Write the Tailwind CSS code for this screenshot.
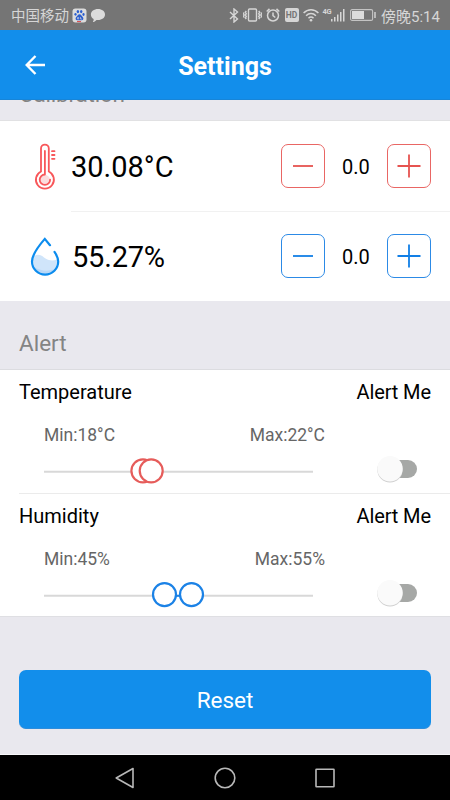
<!DOCTYPE html>
<html lang="en">
<head>
    <meta charset="UTF-8">
    <meta name="viewport" content="width=device-width, initial-scale=1.0">
    <title>Settings</title>
    <script src="https://cdn.jsdelivr.net/npm/@tailwindcss/browser@4"></script>
</head>
<body class="bg-[#e9e8ee] font-[Roboto,'Noto_Sans_CJK_SC',sans-serif]">
    <div class="w-[450px] h-[800px] flex flex-col overflow-hidden">
        <!-- Status bar -->
        <div class="h-[30px] shrink-0 bg-[#757575] text-[#d6d6d6] flex items-center pl-[11px] pr-[10px] text-[14.500px] leading-none whitespace-nowrap">
            <span class="w-[59px] pt-[4px]">中国移动</span>
            <svg class="ml-[2px]" width="15" height="15" viewBox="0 0 15 15">
                <rect x="0.5" y="0.5" width="14" height="14" rx="3" fill="#dcdcdc"/>
                <g fill="#2c5fd0">
                    <ellipse cx="5.9" cy="3.6" rx="1.2" ry="1.6"/>
                    <ellipse cx="9.2" cy="3.6" rx="1.2" ry="1.6"/>
                    <ellipse cx="3.5" cy="6.3" rx="1.1" ry="1.4"/>
                    <ellipse cx="11.5" cy="6.5" rx="1.1" ry="1.4"/>
                    <path d="M7.5 6.2c1.6 0 2 1.6 3.2 2.7 1.3 1.3.7 3.4-1.2 3.4H5.3c-1.7 0-2.3-2-1.1-3.3C5.4 7.900 6 6.200 7.500 6.200z"/>
                </g>
                <path d="M5.500 9.500h1.200v1.500H5.500zM8.500 9v2h1.500" fill="none" stroke="#dcdcdc" stroke-width=".6"/>
                <path d="M5 13.600h4" stroke="#d44" stroke-width="1"/>
            </svg>
            <svg class="ml-[3px]" width="16" height="15" viewBox="0 0 16 15">
                <path d="M8 1c4 0 7 2.300 7 5.500S12 12 8 12c-.5 0-1 0-1.500-.1C5.500 13.200 4 13.900 2.800 14c.7-.8 1-1.800.8-2.900C2 10.100.9 8.500.9 6.500.9 3.300 4 1 8 1z" fill="#dcdcdc"/>
            </svg>
            <div class="ml-auto flex items-center">
                <svg width="10" height="15" viewBox="0 0 10 15" fill="none" stroke="#d6d6d6" stroke-width="1.400">
                    <path d="M1 4l7.500 7L5 14V1l3.500 3L1 11"/>
                </svg>
                <svg class="ml-[4px]" width="19" height="14" viewBox="0 0 19 14" fill="none" stroke="#d6d6d6" stroke-width="1.400">
                    <rect x="5.500" y="1" width="8" height="12" rx="1"/>
                    <path d="M3.300 3l-1 1.300 1 1.400-1 1.300 1 1.400-1 1.300 1 1.300M.9 4.500L.5 5.500l.5 1.500-.5 1.500.5 1M15.700 3l1 1.300-1 1.400 1 1.300-1 1.400 1 1.300-1 1.300M18.100 4.500l.4 1-.5 1.500.5 1.500-.5 1"/>
                </svg>
                <svg class="ml-[4px]" width="14" height="14" viewBox="0 0 14 14" fill="none" stroke="#d6d6d6" stroke-width="1.500">
                    <circle cx="7" cy="7.500" r="5.500"/>
                    <path d="M7 4.500v3.200l2.300 1.800M.7 3.500L3.500.9M13.300 3.500L10.500.9"/>
                </svg>
                <div class="ml-[5px] w-[14px] h-[14px] rounded-[2px] bg-[#d6d6d6] text-[#757575] text-[8.500px] leading-[14px] font-bold text-center">HD</div>
                <svg class="ml-[4px]" width="16" height="14" viewBox="0 0 16 14" fill="none" stroke="#d6d6d6" stroke-width="1.500">
                    <path d="M.6 5C4.800.6 11.200.6 15.400 5M3.100 7.700c2.800-2.900 7-2.900 9.800 0M5.500 10.200c1.500-1.500 3.500-1.500 5 0"/>
                    <circle cx="8" cy="12.200" r="1.300" fill="#d6d6d6" stroke="none"/>
                </svg>
                <div class="ml-[4px] -mr-[1px] h-[15px] text-[7.500px] leading-[8px] font-bold tracking-[-0.5px]">4G</div>
                <svg width="15" height="14" viewBox="0 0 15 14" fill="#d6d6d6">
                    <path d="M1 11h1.500v2.500H1zM4 9h1.500v4.500H4zM7 6.500h1.500v7H7zM10 4h1.500v9.500H10zM13 1h1.500v12.500H13z"/>
                </svg>
                <svg class="ml-[5px]" width="26" height="12" viewBox="0 0 26 12">
                    <rect x=".6" y=".6" width="22" height="10.800" rx="1.500" fill="none" stroke="#c4c4c4" stroke-width="1.100"/>
                    <path d="M2 2h12v8H2z" fill="#dcdcdc"/>
                    <path d="M24.300 3h1.400v6h-1.400z" fill="#d6d6d6"/>
                </svg>
                <span class="ml-[5px] w-[59px] text-[15px] pt-[4px]">傍晚5:14</span>
            </div>
        </div>

        <!-- Header -->
        <div class="h-[70px] shrink-0 bg-[#128eeb] border-b border-[#1785d8] grid grid-cols-[1fr_auto_1fr] items-center px-[25px] text-white">
            <svg width="21" height="20" viewBox="0 0 21 20" fill="none" stroke="white" stroke-width="2.400">
                <path d="M10.500 1L1.700 10l8.800 9M1.700 10H20"/>
            </svg>
            <h1 class="text-[25px] leading-none font-bold pt-[4px]">Settings</h1>
        </div>

        <!-- Calibration -->
        <div class="h-[21px] shrink-0 border-b border-[#e1e1e3] overflow-hidden">
            <h2 class="-mt-[20px] pl-[19px] text-[22.500px] leading-[28px] tracking-[-0.2px] text-[#848484]">Calibration</h2>
        </div>
        <div class="h-[180px] shrink-0 bg-white">
            <div class="h-[91px] flex pl-[31px]">
                <svg class="mt-[22px] w-[28px] shrink-0" height="48" viewBox="0 0 28 48" fill="none" stroke="#f8575a" stroke-width="1.800" stroke-linecap="round">
                    <circle cx="14" cy="37" r="5" fill="#fbdcdd" stroke="none"/>
                    <path d="M10 28.500V5.500a3.900 3.900 0 0 1 7.800 0v23a9 9 0 1 1-7.800 0z"/>
                    <path d="M13.900 8v23.300M13.900 31.500a5.200 5.200 0 1 0 5.200 5.200M21 8.200h2.500M21 12h2.500M21 15.800h2.500"/>
                </svg>
                <div class="ml-[12px] flex-1 border-b border-[#f1f1f1] flex items-center pr-[19px]">
                    <span class="text-[29px] leading-none pt-[2px]">30.08°C</span>
                    <button class="ml-auto w-[44px] h-[44px] border border-[#e96664] rounded-[7px] flex items-center justify-center">
                        <svg width="24" height="24" viewBox="0 0 24 24" stroke="#e65350" stroke-width="1.800"><path d="M2 12h20"/></svg>
                    </button>
                    <span class="w-[62px] text-center text-[20px] leading-none pt-[2px]">0.0</span>
                    <button class="w-[44px] h-[44px] border border-[#e96664] rounded-[7px] flex items-center justify-center">
                        <svg width="24" height="24" viewBox="0 0 24 24" stroke="#e65350" stroke-width="1.800"><path d="M.5 12h23M12 .5v23"/></svg>
                    </button>
                </div>
            </div>
            <div class="h-[89px] flex pl-[30px]">
                <svg class="mt-[25px] w-[30px] shrink-0" height="40" viewBox="0 0 30 40" fill="none" stroke="#0c8cee" stroke-width="2.200" stroke-linecap="round">
                    <path d="M3.500 19.500c4-3 7.500-1.500 10.500 1 4 3 8.500 4 13 2 .8 8-4.500 14.500-12 14.500S1.500 29.500 3.500 19.500z" fill="#d0e5fa" stroke="none"/>
                    <path d="M4 30c7 4 13 4.500 20 2.500-2.500 3-6 4.500-9 4.500-4.500 0-8.500-2.500-11-7z" fill="#b9d8f7" stroke="none"/>
                    <path d="M20 8.200L14.800 1.900C10 7.400 2 16.800 2 24.500a13.100 13.100 0 0 0 26.200 0c0-3.300-1.700-6.700-3.700-9.700"/>
                </svg>
                <div class="ml-[12px] h-[88px] flex-1 flex items-center pr-[19px]">
                    <span class="text-[29px] leading-none pt-[3px] tracking-[-0.2px]">55.27%</span>
                    <button class="ml-auto w-[44px] h-[44px] border border-[#2c8ae6] rounded-[7px] flex items-center justify-center">
                        <svg width="24" height="24" viewBox="0 0 24 24" stroke="#127fe6" stroke-width="1.800"><path d="M2 12h20"/></svg>
                    </button>
                    <span class="w-[62px] text-center text-[20px] leading-none pt-[2px]">0.0</span>
                    <button class="w-[44px] h-[44px] border border-[#2c8ae6] rounded-[7px] flex items-center justify-center">
                        <svg width="24" height="24" viewBox="0 0 24 24" stroke="#127fe6" stroke-width="1.800"><path d="M.5 12h23M12 .5v23"/></svg>
                    </button>
                </div>
            </div>
        </div>

        <!-- Alert -->
        <div class="h-[69px] shrink-0 border-b border-[#dcdce0] flex items-end pl-[19px] pb-[12px]">
            <h2 class="text-[22.500px] leading-[28px] text-[#848484]">Alert</h2>
        </div>
        <div class="h-[247px] shrink-0 bg-white pl-[19px] border-b border-[#dfdfe3]">
            <div class="h-[124px] border-b border-[#ebebeb] pr-[19px] pt-[10px]">
                <div class="flex justify-between text-[20px] leading-[24px]">
                    <span>Temperature</span>
                    <span class="tracking-[-0.1px]">Alert Me</span>
                </div>
                <div class="flex justify-between pl-[25px] pr-[106px] mt-[20px] text-[17.500px] leading-[22px] text-[#666]">
                    <span>Min:18°C</span>
                    <span>Max:22°C</span>
                </div>
                <div class="flex items-center justify-between pl-[24px] pr-[13px] mt-[8px]">
                    <svg width="271" height="30" viewBox="0 0 271 30">
                        <path d="M1 17.800h269" stroke="#d8d8d8" stroke-width="2"/>
                        <g fill="white" stroke="#e65c5a" stroke-width="2.200">
                            <circle cx="99.900" cy="16.800" r="11.500"/>
                            <circle cx="108.200" cy="16.800" r="11.500"/>
                        </g>
                    </svg>
                    <svg width="42" height="30" viewBox="0 0 42 30">
                        <rect x="8" y="6" width="33" height="18" rx="9" fill="#a6a8a6"/>
                        <circle cx="14" cy="15.800" r="12.700" fill="#cfcfcf"/>
                        <circle cx="14" cy="14.800" r="12.700" fill="#fafafa"/>
                    </svg>
                </div>
            </div>
            <div class="h-[122px] pr-[19px] pt-[10px]">
                <div class="flex justify-between text-[20px] leading-[24px]">
                    <span>Humidity</span>
                    <span class="tracking-[-0.1px]">Alert Me</span>
                </div>
                <div class="flex justify-between pl-[25px] pr-[106px] mt-[20px] text-[17.500px] leading-[22px] text-[#666]">
                    <span>Min:45%</span>
                    <span>Max:55%</span>
                </div>
                <div class="flex items-center justify-between pl-[24px] pr-[13px] mt-[8px]">
                    <svg width="271" height="30" viewBox="0 0 271 30">
                        <path d="M1 17.800h269" stroke="#d8d8d8" stroke-width="2"/>
                        <path d="M122 17.800h26" stroke="#1b82e6" stroke-width="2"/>
                        <g fill="white" stroke="#1b82e6" stroke-width="2.200">
                            <circle cx="121.500" cy="16.600" r="11.500"/>
                            <circle cx="148.500" cy="16.600" r="11.500"/>
                        </g>
                    </svg>
                    <svg width="42" height="30" viewBox="0 0 42 30">
                        <rect x="8" y="6" width="33" height="18" rx="9" fill="#a6a8a6"/>
                        <circle cx="14" cy="15.800" r="12.700" fill="#cfcfcf"/>
                        <circle cx="14" cy="14.800" r="12.700" fill="#fafafa"/>
                    </svg>
                </div>
            </div>
        </div>

        <!-- Reset -->
        <div class="flex-1 px-[19px] pt-[53px] border-b border-[#f8f8fa]">
            <button class="w-full h-[59px] rounded-[7px] bg-[#128eeb] border-b border-[#2d8ddc] text-white text-[22.500px] leading-none pt-[3px]">Reset</button>
        </div>

        <!-- Navigation bar -->
        <div class="h-[45px] shrink-0 bg-black flex items-center justify-center gap-[78px]">
            <svg width="22" height="24" viewBox="0 0 22 24" fill="none" stroke="#b8b8b8" stroke-width="1.600" stroke-linejoin="round"><path d="M19 2.500v19L2.200 12z"/></svg>
            <svg width="22" height="24" viewBox="0 0 22 24" fill="none" stroke="#b8b8b8" stroke-width="1.600"><circle cx="11" cy="12" r="9.800"/></svg>
            <svg width="22" height="24" viewBox="0 0 22 24" fill="none" stroke="#b8b8b8" stroke-width="1.600"><rect x="2" y="3.200" width="18" height="17.600" rx=".5"/></svg>
        </div>
    </div>
</body>
</html>
